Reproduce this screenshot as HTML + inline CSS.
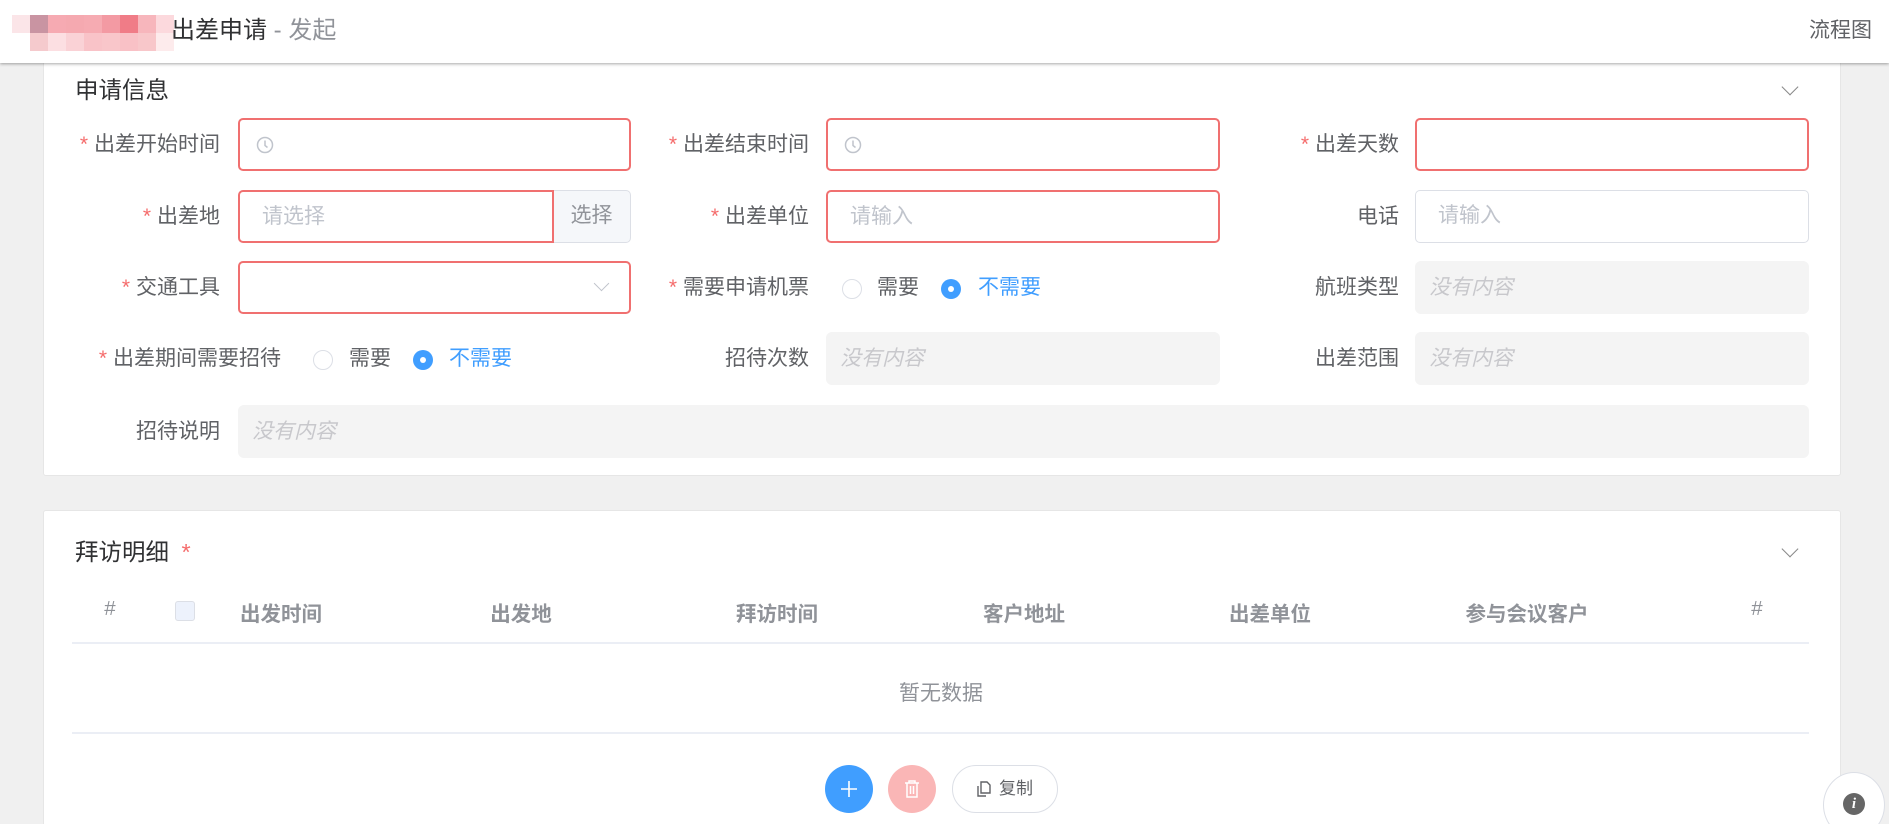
<!DOCTYPE html>
<html style="width:1889px;height:824px;overflow:hidden"><head><meta charset="utf-8"><style>
*{box-sizing:border-box;margin:0;padding:0}
body{width:1889px;height:824px;overflow:hidden;background:#f0f0f0;font-family:"Liberation Sans","Noto Sans CJK SC",sans-serif;color:#606266;position:relative}
.abs{position:absolute}
.hdr{left:0;top:0;width:1889px;height:63px;background:#fff;box-shadow:0 1px 3px rgba(0,0,0,.35);z-index:5}
.card{background:#fff;border:1px solid #e6e6e6;border-radius:3px}
.lbl{font-size:21px;color:#606266;text-align:right;white-space:nowrap;line-height:53px;height:53px}
.star{color:#f56c6c;margin-right:6px}
.inp{height:53px;border-radius:5px;border:2px solid #f07070;background:#fff}
.inp.ok{border:1.5px solid #dcdfe6}
.dis{height:53px;border-radius:6px;background:#f4f4f4;font-size:21px;color:#c8c8cc;font-style:italic;line-height:53px;padding-left:14px}
.ph{font-size:21px;color:#c0c4cc;line-height:49px;padding-left:22px}
.th{font-size:20.5px;font-weight:bold;color:#909399;top:597px;transform:translateX(-50%);white-space:nowrap}
.radio{width:20px;height:20px;border-radius:50%;border:1.5px solid #dcdfe6;background:#fff}
.radio.on{background:#409eff;border:none}
.radio.on:after{content:"";position:absolute;left:7px;top:7px;width:6px;height:6px;border-radius:50%;background:#fff}
.rt{font-size:21px;line-height:26px}
.chev{width:12px;height:12px;border-right:1.5px solid #888;border-bottom:1.5px solid #888;transform:rotate(45deg)}
</style></head><body>
<div class="abs hdr">
  <div class="abs" style="left:12px;top:15px;display:flex;flex-wrap:wrap;width:162px">
   <div style="width:18px;height:18px;background:#fbe5e8"></div><div style="width:18px;height:18px;background:#c994a2"></div><div style="width:18px;height:18px;background:#f6aab2"></div><div style="width:18px;height:18px;background:#f5a9b0"></div><div style="width:18px;height:18px;background:#f6abb2"></div><div style="width:18px;height:18px;background:#f39aa3"></div><div style="width:18px;height:18px;background:#f07c87"></div><div style="width:18px;height:18px;background:#f7b6bc"></div><div style="width:18px;height:18px;background:#fcd9dd"></div>
   <div style="width:18px;height:18px;background:#fff"></div><div style="width:18px;height:18px;background:#f5cacd"></div><div style="width:18px;height:18px;background:#fcdfe2"></div><div style="width:18px;height:18px;background:#fad2d6"></div><div style="width:18px;height:18px;background:#f9c3c8"></div><div style="width:18px;height:18px;background:#f9c6ca"></div><div style="width:18px;height:18px;background:#f9c1c6"></div><div style="width:18px;height:18px;background:#f8c7ca"></div><div style="width:18px;height:18px;background:#fdebec"></div>
  </div>
  <div class="abs" style="left:171px;top:14px;font-size:24px;color:#303133;line-height:34px">出差申请 <span style="color:#909399">- 发起</span></div>
  <div class="abs" style="left:1809px;top:17px;font-size:21px;color:#606266;line-height:28px">流程图</div>
</div>

<div class="abs card" style="left:43px;top:50px;width:1798px;height:426px"></div>
<div class="abs" style="left:75px;top:75px;font-size:23.5px;color:#303133;line-height:30px">申请信息</div>
<div class="abs chev" style="left:1784px;top:81px"></div>

<div class="abs lbl" style="left:0px;width:220px;top:118px"><span class="star">*</span>出差开始时间</div>
<div class="abs inp" style="left:238px;top:118px;width:393px"><svg class="abs" style="left:16px;top:16px" width="18" height="18" viewBox="0 0 18 18"><circle cx="9" cy="9" r="7.5" fill="none" stroke="#c0c4cc" stroke-width="1.5"/><path d="M9 4.5V9.5L11.5 11.5" fill="none" stroke="#c0c4cc" stroke-width="1.5"/></svg></div>
<div class="abs lbl" style="left:600px;width:209px;top:118px"><span class="star">*</span>出差结束时间</div>
<div class="abs inp" style="left:826px;top:118px;width:394px"><svg class="abs" style="left:16px;top:16px" width="18" height="18" viewBox="0 0 18 18"><circle cx="9" cy="9" r="7.5" fill="none" stroke="#c0c4cc" stroke-width="1.5"/><path d="M9 4.5V9.5L11.5 11.5" fill="none" stroke="#c0c4cc" stroke-width="1.5"/></svg></div>
<div class="abs lbl" style="left:1200px;width:199px;top:118px"><span class="star">*</span>出差天数</div>
<div class="abs inp" style="left:1415px;top:118px;width:394px"></div>

<div class="abs lbl" style="left:0px;width:220px;top:190px"><span class="star">*</span>出差地</div>
<div class="abs" style="left:553px;top:190px;width:78px;height:53px;background:#f5f7fa;border:1.5px solid #dcdfe6;border-left:none;border-radius:0 5px 5px 0;font-size:21px;color:#909399;line-height:50px;text-align:center">选择</div>
<div class="abs inp ph" style="left:238px;top:190px;width:316px;border-radius:5px 0 0 5px">请选择</div>
<div class="abs lbl" style="left:600px;width:209px;top:190px"><span class="star">*</span>出差单位</div>
<div class="abs inp ph" style="left:826px;top:190px;width:394px">请输入</div>
<div class="abs lbl" style="left:1200px;width:199px;top:190px">电话</div>
<div class="abs inp ok ph" style="left:1415px;top:190px;width:394px">请输入</div>

<div class="abs lbl" style="left:0px;width:220px;top:261px"><span class="star">*</span>交通工具</div>
<div class="abs inp" style="left:238px;top:261px;width:393px"><div class="abs" style="right:22px;top:15px;width:11px;height:11px;border-right:1.5px solid #c0c4cc;border-bottom:1.5px solid #c0c4cc;transform:rotate(45deg)"></div></div>
<div class="abs lbl" style="left:600px;width:209px;top:261px"><span class="star">*</span>需要申请机票</div>
<div class="abs radio" style="left:842px;top:279px"></div><div class="abs rt" style="left:877px;top:275px">需要</div>
<div class="abs radio on" style="left:941px;top:279px"></div><div class="abs rt" style="left:978px;top:275px;color:#409eff">不需要</div>
<div class="abs lbl" style="left:1200px;width:199px;top:261px">航班类型</div>
<div class="abs dis" style="left:1415px;top:261px;width:394px">没有内容</div>

<div class="abs lbl" style="left:0px;width:281px;top:332px"><span class="star">*</span>出差期间需要招待</div>
<div class="abs radio" style="left:313px;top:350px"></div><div class="abs rt" style="left:349px;top:346px">需要</div>
<div class="abs radio on" style="left:413px;top:350px"></div><div class="abs rt" style="left:449px;top:346px;color:#409eff">不需要</div>
<div class="abs lbl" style="left:600px;width:209px;top:332px">招待次数</div>
<div class="abs dis" style="left:826px;top:332px;width:394px">没有内容</div>
<div class="abs lbl" style="left:1200px;width:199px;top:332px">出差范围</div>
<div class="abs dis" style="left:1415px;top:332px;width:394px">没有内容</div>

<div class="abs lbl" style="left:0px;width:220px;top:405px">招待说明</div>
<div class="abs dis" style="left:238px;top:405px;width:1571px">没有内容</div>

<div class="abs card" style="left:43px;top:510px;width:1798px;height:320px"></div>
<div class="abs" style="left:75px;top:537px;font-size:23.5px;color:#303133;line-height:30px">拜访明细 <span style="color:#f56c6c;margin-left:6px">*</span></div>
<div class="abs chev" style="left:1784px;top:543px"></div>

<div class="abs th" style="left:110px;font-weight:normal">#</div>
<div class="abs" style="left:175px;top:601px;width:20px;height:20px;border:1.5px solid #dcdfe6;border-radius:3px;background:#edf2fc"></div>
<div class="abs th" style="left:281px">出发时间</div>
<div class="abs th" style="left:521px">出发地</div>
<div class="abs th" style="left:777px">拜访时间</div>
<div class="abs th" style="left:1024px">客户地址</div>
<div class="abs th" style="left:1270px">出差单位</div>
<div class="abs th" style="left:1527px">参与会议客户</div>
<div class="abs th" style="left:1757px;font-weight:normal">#</div>
<div class="abs" style="left:72px;top:642px;width:1737px;height:2px;background:#ebeef5"></div>
<div class="abs" style="left:941px;top:677px;transform:translateX(-50%);font-size:21px;color:#909399">暂无数据</div>
<div class="abs" style="left:72px;top:732px;width:1737px;height:1.5px;background:#ebeef5"></div>

<div class="abs" style="left:825px;top:765px;width:48px;height:48px;border-radius:50%;background:#409eff"><svg class="abs" style="left:15px;top:15px" width="18" height="18"><path d="M9 1V17M1 9H17" stroke="#fff" stroke-width="1.6"/></svg></div>
<div class="abs" style="left:888px;top:765px;width:48px;height:48px;border-radius:50%;background:#fab6b6"><svg class="abs" style="left:15px;top:14px" width="18" height="20" viewBox="0 0 18 20"><path d="M2 4H16M6 4V2H12V4M4 4V18H14V4M7.5 7V15M10.5 7V15" fill="none" stroke="#fff" stroke-width="1.5"/></svg></div>
<div class="abs" style="left:952px;top:765px;width:106px;height:48px;border-radius:24px;border:1.5px solid #dcdfe6;background:#fff;font-size:17px;color:#606266;line-height:45px;padding-left:46px">复制<svg class="abs" style="left:22px;top:14px" width="18" height="18" viewBox="0 0 18 18"><path d="M6 2H12L15 5V13H6Z" fill="none" stroke="#606266" stroke-width="1.4"/><path d="M3 6V16H11" fill="none" stroke="#606266" stroke-width="1.4"/></svg></div>

<div class="abs" style="left:1823px;top:772px;width:62px;height:52px;overflow:hidden"><div class="abs" style="left:0;top:0;width:62px;height:66px;border-radius:50%;border:1.5px solid #dcdfe6;background:#fff"><div class="abs" style="left:19px;top:20px;width:22px;height:22px;border-radius:50%;background:#666;color:#fff;font-size:15px;font-style:italic;font-weight:bold;text-align:center;line-height:22px;font-family:'Liberation Serif',serif">i</div></div></div>
</body></html>
